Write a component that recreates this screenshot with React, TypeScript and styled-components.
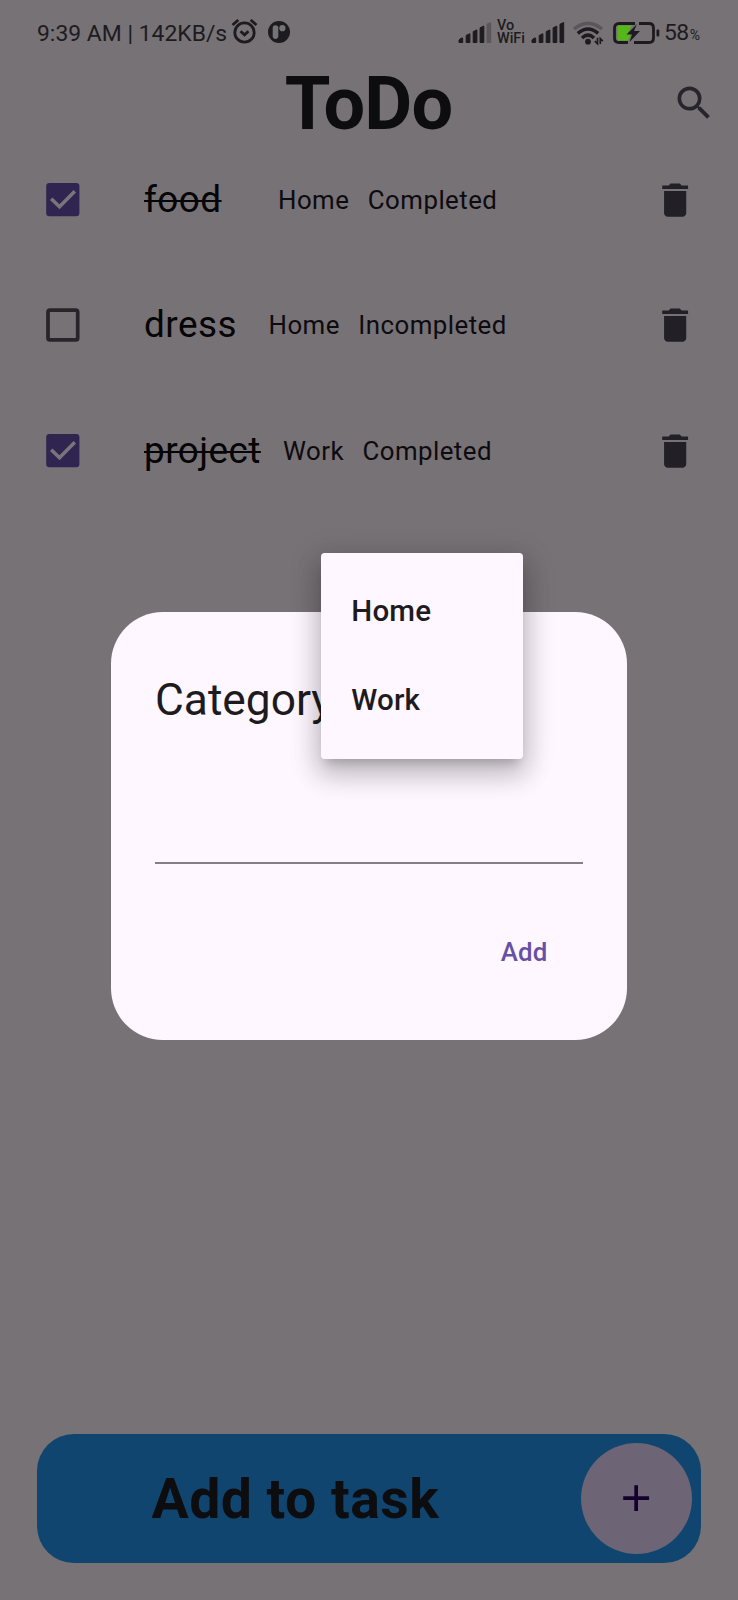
import React from "react";
import styled, { createGlobalStyle } from "styled-components";

const GlobalStyle = createGlobalStyle`
  * { box-sizing: border-box; }
  body { margin: 0; background: #777276; font-family: Roboto, "Liberation Sans", sans-serif; }
`;

const Screen = styled.div`
  position: relative;
  width: 738px;
  height: 1600px;
  overflow: hidden;
  display: flex;
  flex-direction: column;
  background: #777276;
`;

const StatusBar = styled.div`
  height: 66px;
  padding: 0 37px;
  display: flex;
  align-items: center;
  justify-content: space-between;
  color: #1d1b20;
  font-size: 22.9px;
  line-height: 26px;
`;

const StatusText = styled.span`
  width: 193px;
  padding-top: 1px;
  white-space: nowrap;
`;

const StatusGroup = styled.div`
  display: flex;
  align-items: center;
  svg { display: block; flex: none; }
`;

const VoWifi = styled.div`
  width: 39px;
  padding-left: 5px;
  margin-top: -2px;
  font: 500 14.4px/13.5px Roboto, sans-serif;
  white-space: nowrap;
`;

const Percent = styled.span`
  width: 37px;
  margin-left: 4px;
  padding-top: 1px;
  letter-spacing: -0.5px;
  white-space: nowrap;
  small { font-size: 14px; margin-left: 1px; }
`;

const Header = styled.header`
  height: 71px;
  padding-top: 3px;
  display: grid;
  grid-template-columns: 91px 1fr 91px;
  align-items: center;
  svg { display: block; margin: -1px 0 0 24.5px; }
`;

const Heading = styled.h1`
  margin: 0 1px 0 0;
  text-align: center;
  color: #0d0c0e;
  font-size: 73.8px;
  line-height: 70px;
  font-weight: 700;
  letter-spacing: -0.8px;
`;

const Row = styled.div`
  height: 125.6px;
  padding: 0 41px 0 46px;
  display: flex;
  align-items: center;
  svg { display: block; flex: none; }
`;

const Task = styled.span<{ $width: number; $done: boolean }>`
  width: ${(p) => p.$width}px;
  margin-left: 64px;
  flex: none;
  color: #050406;
  font-size: 36.9px;
  line-height: 52px;
  letter-spacing: 0.46px;
  span { text-decoration: ${(p) => (p.$done ? "line-through 2px" : "none")}; }
`;

const Meta = styled.span`
  margin-right: 18.5px;
  padding-top: 1px;
  color: #0d0b0f;
  font-size: 25.83px;
  line-height: 37px;
  letter-spacing: 0.46px;
`;

const Spacer = styled.div`
  flex: 1;
`;

const AddBar = styled.div`
  height: 129px;
  margin: 0 37px 37px;
  padding-right: 9px;
  border-radius: 37px;
  background: #10456f;
  display: flex;
  align-items: center;
`;

const AddLabel = styled.div`
  flex: 1;
  padding: 2px 0 0 114.5px;
  color: #0d0c0e;
  font-size: 55.35px;
  line-height: 64px;
  font-weight: 700;
  letter-spacing: 0.46px;
`;

const Fab = styled.button`
  width: 111px;
  height: 111px;
  padding: 0;
  border: 0;
  border-radius: 50%;
  background: #6d6476;
  display: grid;
  place-items: center;
`;

const Overlay = styled.div`
  position: absolute;
  inset: 0;
  padding-top: 52px;
  display: flex;
  align-items: center;
  justify-content: center;
`;

const Dialog = styled.div`
  width: 516.6px;
  height: 428px;
  padding: 56px 44.3px 0;
  border-radius: 51.7px;
  background: #fef7ff;
`;

const DialogTitle = styled.h2`
  margin: 0;
  color: #1d1b20;
  font-size: 44.28px;
  line-height: 64px;
  font-weight: 400;
`;

const Field = styled.div`
  height: 131.5px;
  border-bottom: 2px solid #857e88;
`;

const Actions = styled.div`
  height: 177px;
  padding-right: 35.5px;
  display: flex;
  align-items: center;
  justify-content: flex-end;
`;

const TextButton = styled.button`
  padding: 0;
  border: 0;
  background: none;
  color: #6750a4;
  font: 500 25.83px/37px Roboto, sans-serif;
  letter-spacing: 0.18px;
`;

const Menu = styled.ul`
  position: absolute;
  left: 321px;
  top: 552.6px;
  width: 202.4px;
  margin: 0;
  padding: 14.6px 0;
  list-style: none;
  border-radius: 3.7px;
  background: #fef7ff;
  box-shadow:
    0 9px 9px -5px rgba(0, 0, 0, 0.16),
    0 15px 26px 3px rgba(0, 0, 0, 0.16),
    0 6px 30px 5px rgba(0, 0, 0, 0.13);
`;

const MenuItem = styled.li`
  height: 88.6px;
  padding-left: 30.3px;
  color: #1d1b20;
  font-size: 29.52px;
  line-height: 88.6px;
  font-weight: 500;
  letter-spacing: 0.18px;
`;

const AlarmIcon = styled.svg`
  margin-left: 1px;
`;

const BadgeIcon = styled.svg`
  margin-left: 9px;
`;

const SpacedIcon = styled.svg`
  margin-left: 8px;
`;

const Alarm = () => (
  <AlarmIcon width="28" height="28" viewBox="0 0 28 28" fill="none" stroke="#1d1b20" strokeWidth="2.8">
    <circle cx="13.5" cy="13.5" r="9.7" />
    <path d="M1.5 6 7.3 1M25.5 6 19.7 1M9.5 12.300l4 3.600 4-3.600" />
  </AlarmIcon>
);

const AppBadge = () => (
  <BadgeIcon width="22" height="24" viewBox="0 0 22 24">
    <circle cx="11" cy="11" r="11" fill="#1d1b20" />
    <rect x="4.7" y="4.3" width="5.6" height="13.6" rx="2.8" fill="#777276" />
    <circle cx="14.4" cy="7.2" r="3.1" fill="#777276" />
  </BadgeIcon>
);

const Signal = ({ weak = false }: { weak?: boolean }) => (
  <svg width="34" height="22" viewBox="0 0 34 22" fill="#1d1b20" stroke="#1d1b20" strokeWidth="1" strokeLinejoin="round">
    <path d="M1 18.2Q2.500 15.500 4.700 16V20.500H1zM8.200 13.400l3.700-1.700v8.800H8.200zM15.200 9.600l3.700-1.700v12.600h-3.700zM22.100 5.800l3.700-1.700v16.400h-3.700z" />
    <path d="M29 2.200l3.700-1.700v20H29z" fill={weak ? "#5b565b" : "#1d1b20"} stroke={weak ? "#5b565b" : "#1d1b20"} />
  </svg>
);

const Wifi = () => (
  <SpacedIcon width="32" height="25" viewBox="0 0 32 25" fill="none" stroke="#1d1b20" strokeWidth="3.5">
    <path d="M1 8Q15 -3.300 29 8" stroke="#5b565b" />
    <path d="M4.800 12.300Q15 3.600 25.200 12.300M9 17Q15 11.200 21 17" />
    <circle cx="15" cy="20.7" r="2.9" fill="#1d1b20" stroke="none" />
    <path d="M24.500 16.800v6l-2.700-2.600M27.300 23v-5.500l2.500 2.600" strokeWidth="1.7" />
  </SpacedIcon>
);

const Battery = () => (
  <SpacedIcon width="47" height="22" viewBox="0 0 47 22">
    <path d="M4.500 3.500H19L14 12h4l-3 6.500H4.500z" fill="#55b818" />
    <path d="M22 1.500H6Q1.500 1.500 1.500 6v10q0 4.500 4.500 4.500H15M26 1.500H36q4.500 0 4.500 4.500v10q0 4.500-4.500 4.500H21" fill="none" stroke="#1d1b20" strokeWidth="2.8" />
    <path d="M24 2 13.500 12.500H19L16.500 20 27 9H21z" fill="#1d1b20" />
    <rect x="43.5" y="7.5" width="2.8" height="7" rx="1" fill="#1d1b20" />
  </SpacedIcon>
);

const SearchIcon = () => (
  <svg width="44.3" height="44.3" viewBox="0 0 24 24" fill="#28242b">
    <path d="M15.500 14h-.79l-.28-.27A6.471 6.471 0 0 0 16 9.500 6.500 6.500 0 1 0 9.500 16c1.610 0 3.090-.59 4.230-1.570l.27.28v.79l5 4.990L20.490 19l-4.990-5zm-6 0C7.010 14 5 11.990 5 9.500S7.010 5 9.500 5 14 7.010 14 9.500 11.990 14 9.500 14z" />
  </svg>
);

const DeleteIcon = () => (
  <svg width="44.3" height="44.3" viewBox="0 0 24 24" fill="#231f26">
    <path d="M6 19c0 1.100.9 2 2 2h8c1.100 0 2-.9 2-2V7H6v12zM19 4h-3.500l-1-1h-5l-1 1H5v2h14V4z" />
  </svg>
);

const Checkbox = ({ checked }: { checked: boolean }) => (
  <svg width="34" height="34" viewBox="0 0 34 34" fill="none">
    {checked ? (
      <>
        <rect x=".2" y="0" width="33.2" height="33.2" rx="3.2" fill="#302450" />
        <path d="M5.200 15.800 13.500 23.800 28.800 8.300" stroke="#79747a" strokeWidth="3.6" />
      </>
    ) : (
      <rect x="2" y="2.2" width="29.7" height="29.7" rx="2" stroke="#28242b" strokeWidth="3.7" />
    )}
  </svg>
);

const tasks = [
  { name: "food", category: "Home", done: true, width: 134 },
  { name: "dress", category: "Home", done: false, width: 124.5 },
  { name: "project", category: "Work", done: true, width: 139 },
];

export default function App() {
  return (
    <Screen>
      <GlobalStyle />
      <StatusBar>
        <StatusGroup>
          <StatusText>9:39 AM | 142KB/s</StatusText>
          <Alarm />
          <AppBadge />
        </StatusGroup>
        <StatusGroup>
          <Signal weak />
          <VoWifi>Vo<br />WiFi</VoWifi>
          <Signal />
          <Wifi />
          <Battery />
          <Percent>58<small>%</small></Percent>
        </StatusGroup>
      </StatusBar>
      <Header>
        <span />
        <Heading>ToDo</Heading>
        <SearchIcon />
      </Header>
      {tasks.map((t) => (
        <Row key={t.name}>
          <Checkbox checked={t.done} />
          <Task $width={t.width} $done={t.done}><span>{t.name}</span></Task>
          <Meta>{t.category}</Meta>
          <Meta>{t.done ? "Completed" : "Incompleted"}</Meta>
          <Spacer />
          <DeleteIcon />
        </Row>
      ))}
      <Spacer />
      <AddBar>
        <AddLabel>Add to task</AddLabel>
        <Fab aria-label="Add">
          <svg width="44.3" height="44.3" viewBox="0 0 24 24" fill="#14002d">
            <path d="M19 13h-6v6h-2v-6H5v-2h6V5h2v6h6v2z" />
          </svg>
        </Fab>
      </AddBar>
      <Overlay>
        <Dialog role="dialog">
          <DialogTitle>Category</DialogTitle>
          <Field />
          <Actions>
            <TextButton>Add</TextButton>
          </Actions>
        </Dialog>
        <Menu>
          <MenuItem>Home</MenuItem>
          <MenuItem>Work</MenuItem>
        </Menu>
      </Overlay>
    </Screen>
  );
}
